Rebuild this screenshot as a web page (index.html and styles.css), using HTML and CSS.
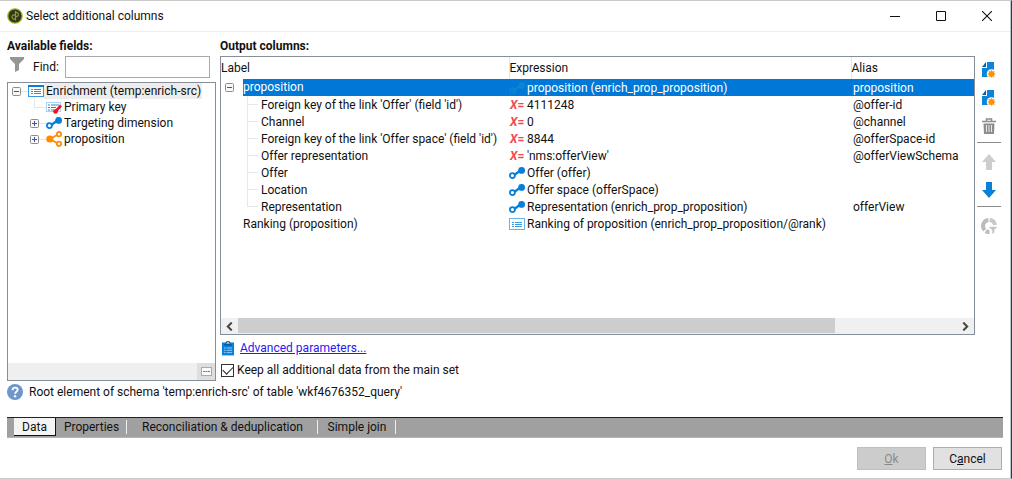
FILE: index.html
```html
<!DOCTYPE html>
<html lang="en">
<head>
<meta charset="utf-8">
<title>Select additional columns</title>
<link rel="stylesheet" href="styles.css">
</head>
<body>
<svg class="sprite" aria-hidden="true">
  <symbol id="link" viewBox="0 0 16 14">
    <path d="M4 10 12 4" stroke="currentColor" stroke-width="2.2"/>
    <circle cx="3.4" cy="9.6" r="2.5" fill="#fff" stroke="currentColor" stroke-width="1.8"/>
    <circle cx="12.6" cy="4.4" r="3.4" fill="currentColor"/>
  </symbol>
  <symbol id="link-selected" viewBox="0 0 16 14">
    <path d="M4 10 12 4" stroke="currentColor" stroke-width="2"/>
    <circle cx="3.4" cy="9.6" r="2.5" fill="none" stroke="currentColor" stroke-width="1.6"/>
    <circle cx="12.6" cy="4.4" r="3.4" fill="currentColor"/>
  </symbol>
  <symbol id="list" viewBox="0 0 16 14">
    <rect x=".5" y="1.5" width="15" height="11" fill="#fff" stroke="#6cb2ea"/>
    <path d="M3 5.500h2M6 5.500h7M3 7.500h2M6 7.500h7M3 9.500h2M6 9.500h7" stroke="#3c9be2"/>
  </symbol>
  <symbol id="new-page" viewBox="0 0 16 16">
    <path d="M6 0h7v15H1V6h5z" fill="#0b84dc"/>
    <path d="M1 5 5 0v5z" fill="#0b5fa5"/>
    <circle cx="10.500" cy="12" r="4.800" fill="#fff"/>
    <path d="m10.500 7.800 1 1.700 2-.5-.5 2 1.700 1-1.700 1 .5 2-2-.5-1 1.500-1-1.500-2 .5.5-2-1.700-1 1.700-1-.5-2 2 .5z" fill="#ff9200"/>
  </symbol>
  <symbol id="arrow-up" viewBox="0 0 16 16">
    <path d="M8 0 15 8h-4v8H5V8H1z" fill="currentColor"/>
  </symbol>
</svg>

<div class="window">
  <header class="titlebar">
    <svg class="app-icon" viewBox="0 0 16 16"><circle cx="8" cy="8" r="7.200" fill="#343522" stroke="#9dbb16" stroke-width="1.300"/><path d="M8.500 3v9.500M8.500 7.500a2 2.200 0 1 0 0 3M8.500 4.500a2 2.200 0 1 1 0 4" fill="none" stroke="#8c9a38" stroke-width="1.200"/></svg>
    <h1 class="title">Select additional columns</h1>
    <div class="window-controls">
      <button class="window-button" aria-label="Minimize"><svg viewBox="0 0 10 10"><path d="M0 5.500h10" stroke="#111"/></svg></button>
      <button class="window-button" aria-label="Maximize"><svg viewBox="0 0 10 10"><path d="M.5.500h9v9h-9z" fill="none" stroke="#111"/></svg></button>
      <button class="window-button" aria-label="Close"><svg viewBox="0 0 10 10"><path d="m0 0 10 10M10 0 0 10" stroke="#111" stroke-width="1.100"/></svg></button>
    </div>
  </header>

  <main class="content">
    <section class="fields">
      <h2 class="heading">Available fields:</h2>
      <div class="find">
        <svg class="filter-icon" viewBox="0 0 14 15"><path d="M0 0h14v2L9 7v6l-4 2V7L0 2z" fill="#969696"/></svg>
        <label class="find-label" for="find">Find:</label>
        <input class="find-input" id="find" type="text">
      </div>
      <div class="tree-box">
        <ul class="tree">
          <li class="tree-row">
            <button class="toggle" aria-label="Collapse Enrichment"><svg viewBox="0 0 9 9"><rect x=".5" y=".5" width="8" height="8" rx="1" fill="#f8f8f8" stroke="#8d8d8d"/><path d="M2 4.500h5" stroke="#4053a8"/></svg></button>
            <span class="stem"></span>
            <svg class="icon" viewBox="0 0 16 14"><rect x=".5" y="1.500" width="15" height="11" fill="#fff" stroke="#3998df"/><path d="M0 2h16" stroke="#087fd8" stroke-width="2"/><path d="M3 5.500h2M6 5.500h7M3 7.500h2M6 7.500h7M3 9.500h2M6 9.500h7" stroke="#2a91df"/></svg>
            <span class="node node-current">Enrichment (temp:enrich-src)</span>
          </li>
          <li class="tree-row tree-child">
            <span class="branch"></span>
            <svg class="icon" viewBox="0 0 16 14"><rect x=".5" y="2.500" width="14" height="9" fill="#fff" stroke="#a9d2f3"/><path d="M2 5h2M5 5h8M2 7.500h2M5 7.500h5M2 10h2M5 10h3" stroke="#258ddd" stroke-width="1.200"/><path d="m9.500 11.500 5.500-6" stroke="#ea1723" stroke-width="2.600"/><circle cx="9.500" cy="11.500" r="2.300" fill="#ea1723"/></svg>
            <span class="node">Primary key</span>
          </li>
          <li class="tree-row tree-child">
            <button class="toggle" aria-label="Expand Targeting dimension"><svg viewBox="0 0 9 9"><rect x=".5" y=".5" width="8" height="8" rx="1" fill="#f8f8f8" stroke="#8d8d8d"/><path d="M2 4.500h5M4.500 2v5" stroke="#4053a8"/></svg></button>
            <span class="stem"></span>
            <svg class="icon blue"><use href="#link"/></svg>
            <span class="node">Targeting dimension</span>
          </li>
          <li class="tree-row tree-child">
            <button class="toggle" aria-label="Expand proposition"><svg viewBox="0 0 9 9"><rect x=".5" y=".5" width="8" height="8" rx="1" fill="#f8f8f8" stroke="#8d8d8d"/><path d="M2 4.500h5M4.500 2v5" stroke="#4053a8"/></svg></button>
            <span class="stem"></span>
            <svg class="icon icon-share" viewBox="0 0 16 16"><g stroke="#ff8c00" stroke-width="1.800" fill="none"><path d="m4 8 7-4M4 8l7 4"/><circle cx="13" cy="3.200" r="2.200"/><circle cx="13" cy="12.800" r="2.200"/></g><circle cx="3.800" cy="8" r="3.600" fill="#ff8c00"/></svg>
            <span class="node">proposition</span>
          </li>
        </ul>
        <div class="tree-footer">
          <button class="more" aria-label="More"><svg viewBox="0 0 11 9"><rect x=".5" y=".5" width="10" height="8" fill="#fafafa" stroke="#aaa"/><path d="M2 4.500h2M4.500 4.500h2M7 4.500h2" stroke="#777"/></svg></button>
        </div>
      </div>
    </section>

    <section class="output">
      <h2 class="heading">Output columns:</h2>
      <div class="output-row">
        <div class="grid-box">
          <table class="grid">
            <colgroup><col class="col-label"><col class="col-expression"><col class="col-alias"></colgroup>
            <thead><tr><th>Label</th><th>Expression</th><th>Alias</th></tr></thead>
            <tbody>
              <tr class="selected">
                <td class="label-cell"><div class="cell root"><button class="toggle" aria-label="Collapse proposition"><svg viewBox="0 0 9 9"><rect x=".5" y=".5" width="8" height="8" rx="1" fill="#f8f8f8" stroke="#8d8d8d"/><path d="M2 4.500h5" stroke="#4053a8"/></svg></button><span class="fill">proposition</span></div></td>
                <td><div class="cell"><svg class="icon dim"><use href="#link-selected"/></svg>proposition (enrich_prop_proposition)</div></td>
                <td>proposition</td>
              </tr>
              <tr><td><div class="cell child"><span class="elbow"></span>Foreign key of the link 'Offer' (field 'id')</div></td><td><div class="cell"><span class="formula"><i>X</i>=</span>4111248</div></td><td>@offer-id</td></tr>
              <tr><td><div class="cell child"><span class="elbow"></span>Channel</div></td><td><div class="cell"><span class="formula"><i>X</i>=</span>0</div></td><td>@channel</td></tr>
              <tr><td><div class="cell child"><span class="elbow"></span>Foreign key of the link 'Offer space' (field 'id')</div></td><td><div class="cell"><span class="formula"><i>X</i>=</span>8844</div></td><td>@offerSpace-id</td></tr>
              <tr><td><div class="cell child"><span class="elbow"></span>Offer representation</div></td><td><div class="cell"><span class="formula"><i>X</i>=</span>'nms:offerView'</div></td><td>@offerViewSchema</td></tr>
              <tr><td><div class="cell child"><span class="elbow"></span>Offer</div></td><td><div class="cell"><svg class="icon blue"><use href="#link"/></svg>Offer (offer)</div></td><td></td></tr>
              <tr><td><div class="cell child"><span class="elbow"></span>Location</div></td><td><div class="cell"><svg class="icon blue"><use href="#link"/></svg>Offer space (offerSpace)</div></td><td></td></tr>
              <tr><td><div class="cell child"><span class="elbow elbow-last"></span>Representation</div></td><td><div class="cell"><svg class="icon blue"><use href="#link"/></svg>Representation (enrich_prop_proposition)</div></td><td>offerView</td></tr>
              <tr><td><div class="cell plain">Ranking (proposition)</div></td><td><div class="cell"><svg class="icon"><use href="#list"/></svg>Ranking of proposition (enrich_prop_proposition/@rank)</div></td><td></td></tr>
            </tbody>
          </table>
          <div class="scrollbar">
            <button class="scroll-button" aria-label="Scroll left"><svg viewBox="0 0 8 8"><path d="M6 .5 2.500 4 6 7.500" fill="none" stroke="#444" stroke-width="1.800"/></svg></button>
            <div class="scroll-track"><div class="scroll-thumb"></div></div>
            <button class="scroll-button" aria-label="Scroll right"><svg viewBox="0 0 8 8"><path d="M2 .5 5.500 4 2 7.500" fill="none" stroke="#444" stroke-width="1.800"/></svg></button>
          </div>
        </div>
        <div class="toolbar">
          <button class="tool" aria-label="Add"><svg viewBox="0 0 16 16"><use href="#new-page"/></svg></button>
          <button class="tool" aria-label="Add expression"><svg viewBox="0 0 16 16"><use href="#new-page"/></svg></button>
          <button class="tool" aria-label="Delete"><svg viewBox="0 0 16 16"><path d="M1 3.500h14M5.500 3V1h5v2" fill="none" stroke="#8d8d8d" stroke-width="1.500"/><path d="M2.500 5.500h11L13 16H3z" fill="#8d8d8d"/><path d="M5.500 7v7M8 7v7M10.500 7v7" stroke="#e8e8e8"/></svg></button>
          <span class="divider"></span>
          <button class="tool off" aria-label="Move up"><svg viewBox="0 0 16 16"><use href="#arrow-up"/></svg></button>
          <button class="tool blue" aria-label="Move down"><svg viewBox="0 0 16 16"><path d="M8 16 1 8h4V0h6v8h4z" fill="currentColor"/></svg></button>
          <span class="divider"></span>
          <button class="tool" aria-label="Distribution"><svg viewBox="0 0 16 16"><path d="M14 7A6 6 0 0 0 8.600 2" fill="none" stroke="#c8c8c8" stroke-width="4"/><path d="M7.400 2A6 6 0 0 0 3.800 12.200" fill="none" stroke="#bcbcbc" stroke-width="4"/><path d="M4.800 13a6 6 0 0 0 3.700 1" fill="none" stroke="#bcbcbc" stroke-width="4"/><path d="M8 8.500h8v1L13.500 12v3L11 16v-4L8 9.500z" fill="#c4c4c4" stroke="#fff" stroke-width=".6"/></svg></button>
        </div>
      </div>
      <div class="advanced">
        <svg class="clipboard" viewBox="0 0 13 16"><path d="M0 2h13v14H0z" fill="#087fd8"/><path d="M4.500 3a2 2 0 1 1 4 0" fill="#fff" stroke="#0a5c9b" stroke-width="1.400"/><path d="M2.500 4.500h8" stroke="#075994" stroke-width="1.600"/><path d="M2 8h2M5 8h6M2 10.500h2M5 10.500h6M2 13h2M5 13h6" stroke="#9bd0f8"/></svg>
        <a class="link" href="#">Advanced parameters...</a>
      </div>
      <label class="keep"><input class="check" type="checkbox" checked>Keep all additional data from the main set</label>
    </section>
  </main>

  <div class="hint">
    <svg class="help" viewBox="0 0 16 16"><circle cx="8" cy="8" r="8" fill="#6c96cc"/><path d="M5.500 6.200c0-3.600 5.200-3.200 5.200-.4 0 1.900-2.600 1.900-2.600 4" fill="none" stroke="#fff" stroke-width="1.800"/><circle cx="8.100" cy="12.200" r="1.200" fill="#fff"/></svg>
    <span>Root element of schema 'temp:enrich-src' of table 'wkf4676352_query'</span>
  </div>

  <nav class="tabs" role="tablist">
    <button class="tab tab-active" role="tab" aria-selected="true">Data</button>
    <button class="tab tab-properties" role="tab">Properties</button>
    <button class="tab tab-wide" role="tab">Reconciliation &amp; deduplication</button>
    <button class="tab tab-join" role="tab">Simple join</button>
  </nav>

  <footer class="actions">
    <button class="action" disabled><u>O</u>k</button>
    <button class="action">C<u>a</u>ncel</button>
  </footer>
</div>
</body>
</html>
```
FILE: styles.css
```css
* { box-sizing: border-box; }

body {
  margin: 0;
  background: #fff;
  color: #111;
  font: 12px/16px Roboto, "Noto Sans", sans-serif;
}

button, input { font: inherit; color: inherit; }

button {
  display: flex;
  align-items: center;
  justify-content: center;
  margin: 0;
  padding: 0;
  border: 0;
  background: none;
}

svg { display: block; flex: none; }
.sprite { position: absolute; width: 0; height: 0; }

.window {
  display: flex;
  flex-direction: column;
  min-height: 100vh;
  padding-right: 1px;
  border: solid #c9c9c9;
  border-width: 1px 0;
  border-right: 1px solid #24414c;
  box-shadow: inset -1px 0 #b5cad0;
}

/* Title bar */
.titlebar {
  display: flex;
  align-items: center;
  height: 31px;
  padding-left: 7px;
  border-bottom: 1px solid #ededed;
}
.app-icon { width: 16px; height: 16px; }
.title { flex: 1; margin: 0 0 0 3px; font-size: 12px; font-weight: 400; }
.window-controls { display: flex; }
.window-button { width: 46px; height: 28px; }
.window-button svg { width: 10px; height: 10px; }

/* Main area */
.content {
  flex: 1;
  display: grid;
  grid-template-columns: 209px minmax(0, 1fr);
  gap: 4px;
  padding: 6px 7px 0;
}
.heading { margin: 0; height: 18px; font-size: 12px; line-height: 16px; font-weight: 700; }
.fields, .output { display: flex; flex-direction: column; min-width: 0; }

.find { display: flex; align-items: center; height: 22px; margin: 0 6px 4px 3px; }
.filter-icon { width: 14px; height: 15px; align-self: flex-start; margin-top: 1px; }
.find-label { width: 41px; padding-left: 9px; }
.find-input {
  flex: 1;
  min-width: 0;
  height: 22px;
  padding: 0 4px;
  border: 1px solid #a6a9ae;
  background: #fff;
}

.tree-box {
  flex: 1;
  display: flex;
  flex-direction: column;
  border: 1px solid #858e99;
}
.tree { flex: 1; margin: 0; padding: 0 0 0 4px; list-style: none; }
.tree-row { display: flex; align-items: center; height: 16px; white-space: nowrap; }
.tree-child { padding-left: 18px; }
.toggle { flex: none; width: 9px; height: 9px; }
.toggle svg { width: 9px; height: 9px; }
.stem { width: 7px; height: 1px; background: #e6e6e6; }
.branch { align-self: flex-start; width: 12px; height: 9px; margin-left: 4px; border: solid #e6e6e6; border-width: 0 0 1px 1px; }
.icon { width: 16px; height: 14px; }
.icon-share { height: 16px; }
.blue { color: #087fd8; }
.dim { color: #0b84d2; }
.node { padding: 0 1px 0 2px; }
.node-current { background: #ededed; }
.tree-footer { display: flex; justify-content: flex-end; height: 17px; background: #efefef; }
.more { width: 18px; background: #dedede; }
.more svg { width: 11px; height: 9px; }

/* Output grid */
.output-row { flex: 1; display: flex; }
.grid-box {
  flex: 1;
  min-width: 0;
  display: flex;
  flex-direction: column;
  border: 1px solid #858e99;
}
.grid { width: 100%; table-layout: fixed; border-collapse: collapse; white-space: nowrap; }
.col-label { width: 288px; }
.col-expression { width: 342px; }
.grid th {
  height: 22px;
  padding: 0;
  border-right: 1px solid #e4e4e4;
  font-weight: 400;
  text-align: left;
}
.grid th:last-child { border-right: 0; }
.grid td { height: 17px; padding: 0 0 0 2px; line-height: 16px; }
.grid td:first-child { padding: 0; }
.grid td:nth-child(2) { padding: 0; }
.cell { display: flex; align-items: center; height: 17px; }
.cell .icon { margin-right: 2px; }
.selected { color: #fff; }
.selected td { background: #0078d7; }
.selected .label-cell { background: none; }
.root { padding-left: 4px; gap: 9px; }
.fill { flex: 1; line-height: 17px; background: #0078d7; }
.plain { padding-left: 22px; }
.child { padding-left: 26px; }
.elbow { flex: none; position: relative; align-self: stretch; width: 14px; border-left: 1px solid #e8e8e8; }
.elbow::after { content: ""; position: absolute; top: 8px; left: 0; width: 10px; height: 1px; background: #e8e8e8; }
.elbow-last { height: 9px; align-self: flex-start; }
.formula { flex: none; width: 18px; padding-left: 1px; color: #f0484d; font-weight: 700; }

.scrollbar { display: flex; height: 16px; margin-top: auto; background: #f0f0f0; }
.scroll-button { width: 17px; height: 16px; }
.scroll-button svg { width: 9px; height: 9px; }
.scroll-track { flex: 1; }
.scroll-thumb { width: 83%; height: 15px; background: #cdcdcd; }

.toolbar { display: flex; flex-direction: column; align-items: center; width: 28px; }
.tool { width: 24px; height: 28px; }
.tool svg { width: 16px; height: 16px; }
.divider { width: 24px; height: 1px; margin: 2px 0 5px; background: #8c8c8c; }
.off { color: #cdcdcd; }

.advanced { display: flex; align-items: center; gap: 6px; height: 26px; padding-left: 2px; }
.clipboard { width: 12px; height: 16px; }
.link { color: #2a18f0; }
.keep { display: flex; align-items: center; gap: 3px; height: 18px; margin-bottom: 2px; }
.check {
  appearance: none;
  width: 13px;
  height: 13px;
  margin: 0 0 0 1px;
  border: 1px solid #333;
  background: #fff;
  display: grid;
  place-items: center;
}
.check:checked::before {
  content: "";
  width: 9px;
  height: 5px;
  margin-bottom: 2px;
  border: solid #222;
  border-width: 0 0 1px 1px;
  transform: rotate(-45deg);
}

.hint { display: flex; align-items: center; gap: 6px; height: 22px; padding-left: 7px; }
.help { width: 16px; height: 16px; }

/* Tabs */
.tabs {
  display: flex;
  height: 21px;
  margin: 14px 7px 0;
  padding-left: 7px;
  border-top: 1px solid #222;
  border-bottom: 1px solid #b5b5b5;
  background: #a0a0a0;
}
.tab { position: relative; height: 18px; }
.tab:not(.tab-active)::after { content: ""; position: absolute; right: 0; top: 2px; width: 1px; height: 14px; background: #eee; }
.tab-active { width: 42px; border: solid #111; border-width: 0 1px 1px 0; background: #f4f4f4; }
.tab-properties { width: 71px; }
.tab-wide { width: 191px; }
.tab-join { width: 78px; }

/* Dialog buttons */
.actions { display: flex; justify-content: flex-end; gap: 7px; padding: 9px 8px 8px; }
.action { width: 69px; height: 23px; border: 1px solid #adadad; background: #e1e1e1; }
.action:disabled { border-color: #bfbfbf; background: #ccc; color: #8a8a8a; }
```
